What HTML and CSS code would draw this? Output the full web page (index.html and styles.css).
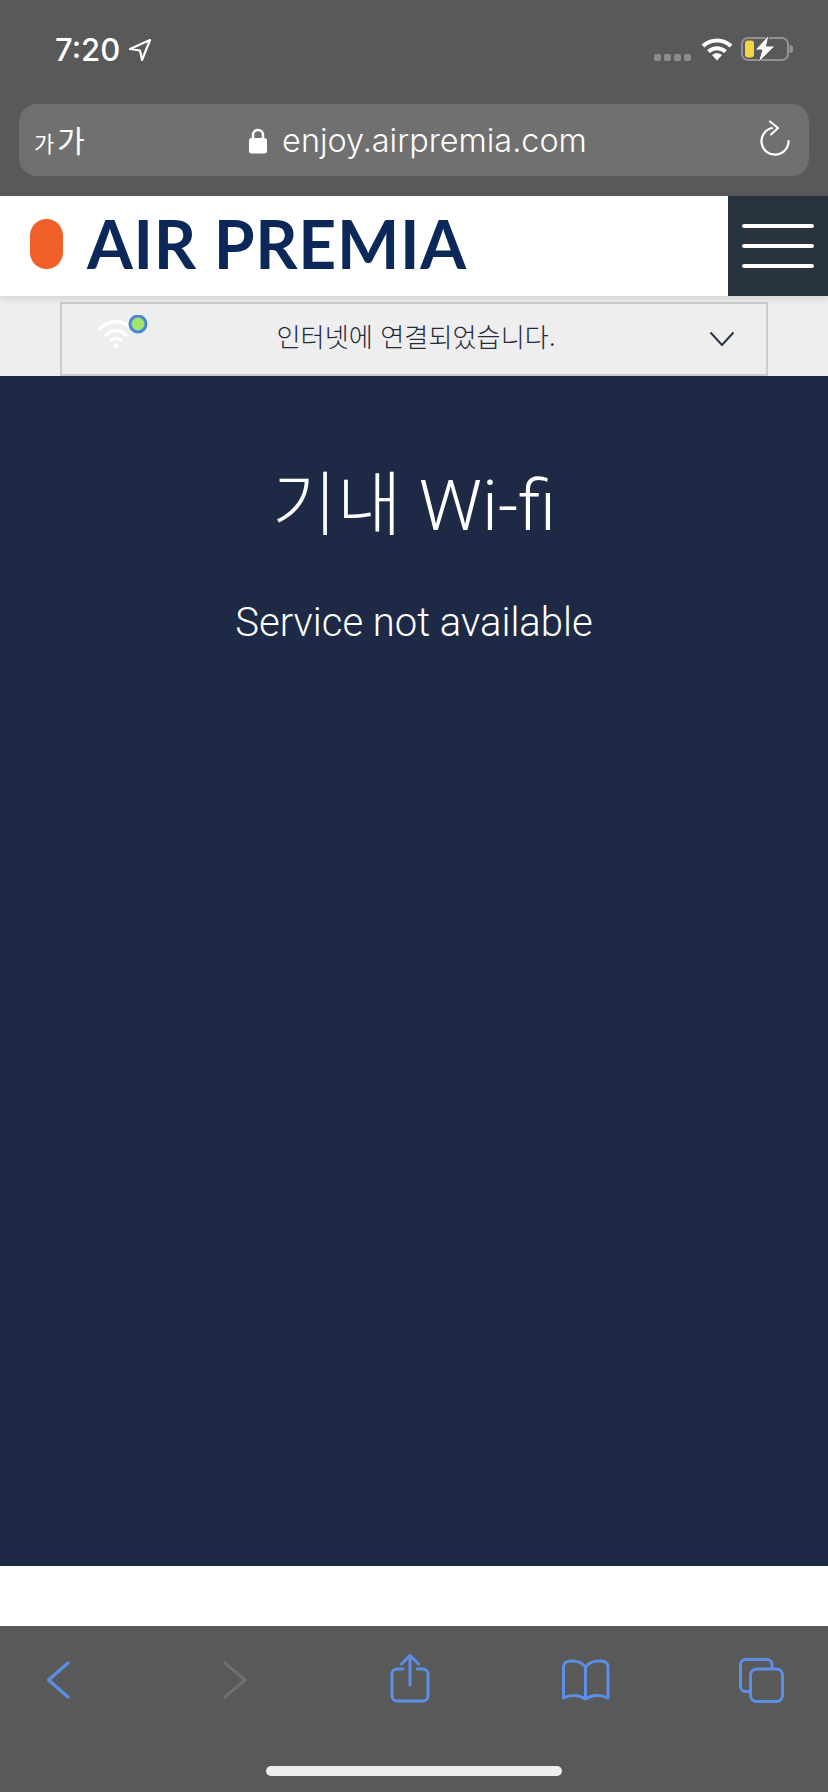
FILE: index.html
```html
<!DOCTYPE html>
<html lang="ko">
<head>
    <meta charset="UTF-8">
    <meta name="viewport" content="width=device-width, initial-scale=1.0">
    <title>Air Premia Wi-fi</title>
    <link rel="stylesheet" href="styles.css">
</head>
<body>
    <div class="browser-top">
        <div class="status-bar">
            <div class="status-left">
                <span class="time">7:20</span>
                <svg class="location" width="24" height="24" viewBox="0 0 24 24"><path d="M22 2 L2 11 L12 12.500 L14 22 Z" fill="none" stroke="#fff" stroke-width="2.200" stroke-linejoin="round"/></svg>
            </div>
            <div class="status-right">
                <div class="signal"><i></i><i></i><i></i><i></i></div>
                <svg class="wifi" width="32" height="24" viewBox="0 0 32 24">
                    <path d="M2 9 C10 1.500 22 1.500 30 9" fill="none" stroke="#fff" stroke-width="4"/>
                    <path d="M7.500 14.500 C12.500 10 19.500 10 24.500 14.500" fill="none" stroke="#fff" stroke-width="4"/>
                    <path d="M11 18 C14 15.500 18 15.500 21 18 L16 23.500 Z" fill="#fff"/>
                </svg>
                <svg class="battery" width="52" height="28" viewBox="0 0 52 28">
                    <rect x="1" y="3" width="46" height="22" rx="6" fill="none" stroke="#929292" stroke-width="2"/>
                    <rect x="4" y="5.500" width="9" height="17" rx="3" fill="#f5d443"/>
                    <path d="M48.500 10 a4 4 0 0 1 0 8 Z" fill="#929292"/>
                    <path d="M28 0 L14 15 H21 L17 28 L34 11 H25.500 Z" fill="#fff" stroke="#595959" stroke-width="1"/>
                </svg>
            </div>
        </div>
        <div class="url-bar">
            <span class="text-size"><small>가</small>가</span>
            <div class="address">
                <svg class="lock" width="20" height="27" viewBox="0 0 20 27">
                    <path d="M5 12 V8 a5 5 0 0 1 10 0 V12" fill="none" stroke="#fff" stroke-width="2.500"/>
                    <rect x="1" y="11" width="18" height="15.500" rx="2.500" fill="#fff"/>
                </svg>
                <span>enjoy.airpremia.com</span>
            </div>
            <svg class="reload" width="32" height="38" viewBox="0 0 32 38">
                <path d="M13 8 A13.500 13.500 0 1 0 29.500 21" fill="none" stroke="#fff" stroke-width="2.200" stroke-linecap="round"/>
                <path d="M11 1.500 L19 8 L12 14.500" fill="none" stroke="#fff" stroke-width="2.200" stroke-linecap="round" stroke-linejoin="round"/>
            </svg>
        </div>
    </div>

    <div class="site-header">
        <div class="logo">
            <span class="logo-mark"></span>
            <span class="logo-text">AIR PREMIA</span>
        </div>
        <div class="menu-btn"><i></i><i></i><i></i></div>
    </div>

    <div class="notice-wrap">
        <div class="notice">
            <div class="notice-icon">
                <svg width="52" height="36" viewBox="0 0 52 36">
                    <path d="M2 15 C12 4 26 4 36 15" fill="none" stroke="#fff" stroke-width="3.500"/>
                    <path d="M8 21 C14 14 24 14 30 21" fill="none" stroke="#fff" stroke-width="3.500"/>
                    <path d="M13 26 C16 22.500 22 22.500 25 26" fill="none" stroke="#fff" stroke-width="3"/>
                    <circle cx="19" cy="31" r="2.500" fill="#fff"/>
                    <circle cx="41" cy="9" r="8" fill="#a3e46f" stroke="#4a86d8" stroke-width="3"/>
                </svg>
            </div>
            <span class="notice-text">인터넷에 연결되었습니다.</span>
            <div class="notice-arrow">
                <svg width="26" height="16" viewBox="0 0 26 16"><path d="M1.500 1.500 L13 14 L24.500 1.500" fill="none" stroke="#2a3347" stroke-width="2"/></svg>
            </div>
        </div>
    </div>

    <div class="content">
        <h1>기내 Wi-fi</h1>
        <p>Service not available</p>
    </div>

    <div class="white-gap"></div>

    <div class="browser-bottom">
        <div class="tools">
            <svg width="60" height="60" viewBox="0 0 60 60"><path d="M40 13 L20.500 30 L40 47" fill="none" stroke="#5b8fe6" stroke-width="3.200" stroke-linecap="round" stroke-linejoin="round"/></svg>
            <svg width="60" height="60" viewBox="0 0 60 60"><path d="M21 13 L41 30 L21 47" fill="none" stroke="#6e6e6e" stroke-width="3.200" stroke-linecap="round" stroke-linejoin="round"/></svg>
            <svg width="60" height="60" viewBox="0 0 60 60"><path d="M23 19 H17 a5 5 0 0 0 -5 5 V46 a5 5 0 0 0 5 5 H43 a5 5 0 0 0 5 -5 V24 a5 5 0 0 0 -5 -5 H37 M30 35 V6 M21.500 14 L30 5.500 L38.500 14" fill="none" stroke="#5b8fe6" stroke-width="3" stroke-linecap="round" stroke-linejoin="round"/></svg>
            <svg width="60" height="60" viewBox="0 0 60 60"><path d="M29.500 17 C26 12 20 10.500 14 11 C10 11.300 7.500 13 7.500 17 V48 C14 44.500 23 44.500 29.500 49 C36 44.500 45 44.500 52 48 V17 C52 13 49.500 11.300 45.500 11 C39 10.500 33 12 29.500 17 Z M29.500 17 V49" fill="none" stroke="#5b8fe6" stroke-width="3" stroke-linejoin="round"/></svg>
            <svg width="60" height="60" viewBox="0 0 60 60">
                <path d="M17 41.500 H13.500 a5 5 0 0 1 -5 -5 V14.500 a5 5 0 0 1 5 -5 H35 a5 5 0 0 1 5 5 V18" fill="none" stroke="#5b8fe6" stroke-width="3"/>
                <rect x="18.500" y="19" width="32" height="32.500" rx="6" fill="none" stroke="#5b8fe6" stroke-width="3"/>
            </svg>
        </div>
        <div class="home-bar"></div>
    </div>
</body>
</html>
```

FILE: styles.css
```css
* {
    margin: 0;
    padding: 0;
    box-sizing: border-box;
}
html, body {
    height: 100%;
}
body {
    display: flex;
    flex-direction: column;
    height: 1792px;
    background-color: #fff;
    font-family: "Inter", "Noto Sans CJK KR", sans-serif;
    overflow: hidden;
}
svg {
    display: block;
}
i {
    display: block;
}

/* browser chrome, top */
.browser-top {
    height: 196px;
    background-color: #595959;
    padding: 0 19px;
}
.status-bar {
    height: 104px;
    display: flex;
    justify-content: space-between;
    padding: 32px 16px 0 36px;
}
.status-left, .status-right {
    display: flex;
    align-items: flex-start;
}
.time {
    color: #fff;
    font-size: 31px;
    line-height: 36px;
    font-weight: 500;
}
.location {
    margin: 6px 0 0 8px;
}
.signal {
    display: flex;
    gap: 3px;
    margin: 22px 10px 0 0;
}
.signal i {
    width: 7px;
    height: 7px;
    border-radius: 2px;
    background-color: #8c8c8c;
}
.wifi {
    margin: 5px 8px 0 0;
}
.battery {
    margin-top: 3px;
}
.url-bar {
    height: 72px;
    display: flex;
    align-items: center;
    justify-content: space-between;
    padding: 0 18px 0 15px;
    background-color: #707070;
    border-radius: 18px;
}
.text-size {
    width: 42px;
    color: #fff;
    font-family: "Noto Sans CJK KR", sans-serif;
    font-size: 30px;
    line-height: 36px;
    white-space: nowrap;
}
.text-size small {
    font-size: 22px;
    margin-right: 3px;
}
.address {
    display: flex;
    align-items: center;
    gap: 14px;
    color: #fff;
    font-size: 32.400px;
    font-weight: 300;
}
.reload {
    margin-top: -2px;
}

/* site header */
.site-header {
    height: 100px;
    display: flex;
    justify-content: space-between;
    background-color: #fff;
    position: relative;
    z-index: 1;
    box-shadow: 0 3px 8px rgba(0, 0, 0, 0.12);
}
.logo {
    display: flex;
    align-items: center;
    padding-left: 30px;
    padding-bottom: 4px;
}
.logo-mark {
    width: 33px;
    height: 50px;
    background-color: #f15f29;
    border-radius: 17px;
}
.logo-text {
    margin-left: 24px;
    color: #0b2858;
    font-family: "Lato", sans-serif;
    font-size: 66px;
    line-height: 50px;
    font-weight: 700;
    letter-spacing: 0.700px;
    white-space: nowrap;
}
.menu-btn {
    width: 100px;
    background-color: #29323f;
    display: flex;
    flex-direction: column;
    gap: 16px;
    padding: 28px 14px 0;
}
.menu-btn i {
    height: 4px;
    border-radius: 2px;
    background-color: #fff;
}

/* connection notice */
.notice-wrap {
    height: 80px;
    padding: 6px 60px 0;
    background-color: #eee;
}
.notice {
    height: 74px;
    display: grid;
    grid-template-columns: 1fr auto 1fr;
    align-items: center;
    border: 2px solid #ccc;
    padding: 0 31px 0 35px;
    background-color: #eee;
}
.notice-icon {
    justify-self: start;
    margin-top: -12px;
}
.notice-text {
    margin-top: -6px;
    color: #1f2a40;
    font-family: "Noto Sans CJK KR", sans-serif;
    font-size: 26.200px;
    font-weight: 300;
}
.notice-arrow {
    justify-self: end;
}

/* main content */
.content {
    height: 1190px;
    background-color: #1e2a45;
    color: #fff;
    text-align: center;
    font-family: "Roboto", "Noto Sans CJK KR", sans-serif;
    font-weight: 300;
    padding-top: 86px;
}
.content h1 {
    font-size: 70.500px;
    line-height: 88px;
    font-weight: 300;
}
.content p {
    margin-top: 49px;
    font-size: 40px;
    line-height: 48px;
}
.white-gap {
    height: 60px;
    background-color: #fff;
}

/* browser chrome, bottom */
.browser-bottom {
    height: 166px;
    background-color: #595959;
}
.tools {
    display: flex;
    justify-content: space-between;
    padding: 24px 36px 0 28px;
}
.home-bar {
    width: 296px;
    height: 10px;
    margin: 56px auto 0;
    border-radius: 5px;
    background-color: #eee;
}
```
